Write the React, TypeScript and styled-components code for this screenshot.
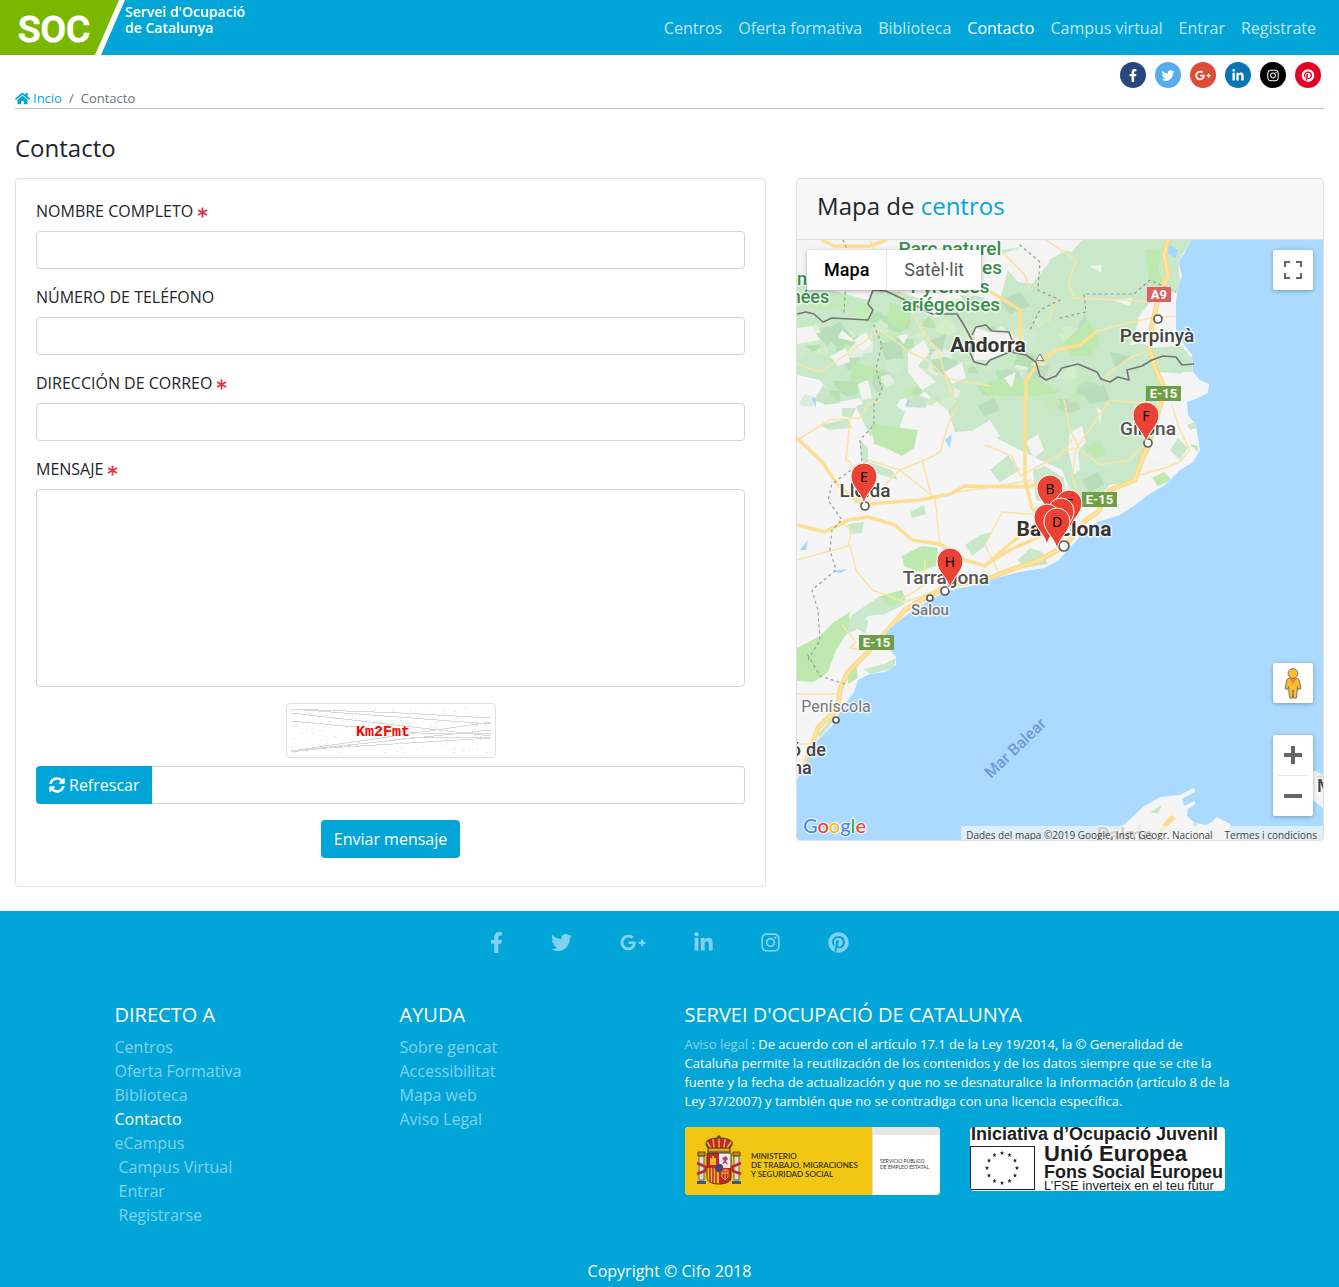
import React from "react";
import styled, { createGlobalStyle, css } from "styled-components";
import {
  FaFacebookF,
  FaTwitter,
  FaGooglePlusG,
  FaLinkedinIn,
  FaInstagram,
  FaPinterest,
  FaHome,
  FaSyncAlt,
} from "react-icons/fa";

const blue = "#02a5d8";
const sans = `"Open Sans", "Noto Sans", sans-serif`;

const GlobalStyle = createGlobalStyle`
  *, *::before, *::after { box-sizing: border-box; }
  body {
    margin: 0;
    background: #fff;
    color: #212529;
    font-family: ${sans};
    font-size: 16px;
    line-height: 24px;
  }
  a { color: ${blue}; text-decoration: none; }
  h1, h2, h3, p, ul, ol { margin: 0; padding: 0; font-weight: 400; }
  ul, ol { list-style: none; }
  svg { display: block; }
  button, input, textarea { font: inherit; }
`;

/* ---------- header ---------- */

const Header = styled.header`
  display: flex;
  justify-content: space-between;
  height: 55px;
  padding-right: 15px;
  background: ${blue};
`;

const Brand = styled.a`
  display: flex;
  color: #fff;
  font-size: 14px;
  font-weight: 600;
  line-height: 16px;
`;

const BrandName = styled.span`
  padding-top: 4px;
`;

const Nav = styled.nav`
  display: flex;
  align-items: center;
`;

const NavLink = styled.a<{ $active?: boolean }>`
  padding: 8px;
  color: ${(p) => (p.$active ? "#fff" : "rgba(255, 255, 255, 0.75)")};
`;

/* ---------- page ---------- */

const Page = styled.main`
  padding: 7px 15px 24px;
`;

const SocialList = styled.ul`
  display: flex;
  justify-content: flex-end;
  gap: 9px;
  margin-bottom: 1px;
  padding-right: 3px;
`;

const SocialLink = styled.a<{ $color: string; $width: number }>`
  display: flex;
  align-items: center;
  justify-content: center;
  width: 26px;
  height: 26px;
  border-radius: 50%;
  background: ${(p) => p.$color};
  color: #fff;

  svg {
    width: ${(p) => p.$width}px;
    height: 13px;
  }
`;

const Breadcrumb = styled.ol`
  display: flex;
  gap: 7px;
  height: 20px;
  border-bottom: 1px solid #bfbfbf;
  color: #6c757d;
  font-size: 13px;
  line-height: 19px;
`;

const HomeLink = styled.a`
  display: flex;
  align-items: center;
  gap: 3px;
`;

const Title = styled.h1`
  margin: 24px 0 16px;
  font-size: 24px;
  line-height: 29px;
`;

const Columns = styled.div`
  display: grid;
  grid-template-columns: 7fr 5fr;
  align-items: start;
  margin: 0 -15px;
`;

const Column = styled.div`
  min-width: 0;
  padding: 0 15px;
`;

const Card = styled.section`
  border: 1px solid #dfdfdf;
  border-radius: 4px;
  background: #fff;
  overflow: hidden;
`;

/* ---------- form ---------- */

const Form = styled.form`
  display: flex;
  flex-direction: column;
  gap: 16px;
  padding: 20px 20px 28px;
`;

const Field = styled.div`
  display: flex;
  flex-direction: column;
  gap: 8px;
`;

const Label = styled.label`
  display: flex;
  align-items: center;
  gap: 4px;

  svg { margin-top: 3px; }
`;

const control = css`
  display: block;
  width: 100%;
  padding: 6px 12px;
  border: 1px solid #ced4da;
  border-radius: 4px;
  background: #fff;
  color: #495057;
`;

const Input = styled.input`
  ${control}
  height: 38px;
`;

const TextArea = styled.textarea`
  ${control}
  height: 198px;
  resize: none;
`;

const CaptchaFrame = styled.div`
  align-self: center;
  padding: 4px;
  border: 1px solid #dee2e6;
  border-radius: 4px;
`;

const InputGroup = styled.div`
  display: flex;

  ${Input} {
    flex: 1;
    border-left: 0;
    border-radius: 0 4px 4px 0;
  }
`;

const Button = styled.button<{ $joined?: boolean }>`
  display: flex;
  align-items: center;
  gap: 4px;
  align-self: center;
  height: 38px;
  padding: 0 13px;
  border: 0;
  border-radius: ${(p) => (p.$joined ? "4px 0 0 4px" : "4px")};
  background: ${blue};
  color: #fff;
  cursor: pointer;
`;

/* ---------- map ---------- */

const CardHeader = styled.h2`
  padding: 12px 20px 19px;
  border-bottom: 1px solid #dfdfdf;
  background: #f7f7f7;
  font-size: 24px;
  line-height: 29px;
`;

const MapBox = styled.div`
  position: relative;
  height: 600px;
  overflow: hidden;
  background: #aadaff;
`;

const MapSvg = styled.svg`
  width: 100%;
  height: 100%;
`;

const MapTypes = styled.div`
  position: absolute;
  top: 10px;
  left: 10px;
  display: flex;
  border-radius: 2px;
  box-shadow: 0 1px 4px rgba(0, 0, 0, 0.3);
`;

const MapType = styled.button<{ $on?: boolean }>`
  height: 40px;
  padding: 0 17px;
  border: 0;
  border-left: ${(p) => (p.$on ? "0" : "1px solid #e6e6e6")};
  background: #fff;
  color: ${(p) => (p.$on ? "#000" : "#565656")};
  font-family: Roboto, sans-serif;
  font-size: 18px;
  font-weight: ${(p) => (p.$on ? 500 : 400)};
`;

const MapTools = styled.div`
  position: absolute;
  top: 10px;
  right: 10px;
  bottom: 24px;
  display: flex;
  flex-direction: column;
`;

const ToolBlock = styled.div<{ $push?: boolean }>`
  margin-top: ${(p) => (p.$push ? "auto" : "0")};
  margin-bottom: ${(p) => (p.$push ? "32px" : "0")};
  border-radius: 2px;
  background: #fff;
  box-shadow: 0 1px 4px rgba(0, 0, 0, 0.3);
`;

const ToolButton = styled.button`
  display: flex;
  align-items: center;
  justify-content: center;
  width: 40px;
  height: 40px;
  padding: 0;
  border: 0;
  background: none;
`;

const ToolRule = styled.div`
  height: 1px;
  margin: 0 5px;
  background: #e6e6e6;
`;

const Attribution = styled.div`
  position: absolute;
  right: 0;
  bottom: 0;
  display: flex;
  gap: 12px;
  height: 14px;
  padding: 0 6px 0 5px;
  background: rgba(245, 245, 245, 0.7);
  color: #444;
  font-size: 10px;
  line-height: 18px;
  white-space: nowrap;

  a { color: #444; }
`;

/* ---------- footer ---------- */

const Footer = styled.footer`
  padding-bottom: 4px;
  background: ${blue};
  color: #fff;
`;

const FooterSocial = styled.ul`
  display: flex;
  justify-content: center;
  gap: 48px;
  padding-top: 21px;
`;

const FooterIcon = styled.a<{ $width: number }>`
  display: block;
  color: rgba(255, 255, 255, 0.5);

  svg {
    width: ${(p) => p.$width}px;
    height: 21px;
  }
`;

const FooterGrid = styled.div`
  display: grid;
  grid-template-columns: 1fr 1fr 2fr;
  max-width: 1140px;
  margin: 50px auto 0;
`;

const FooterColumn = styled.section`
  padding: 0 15px;
`;

const FooterTitle = styled.h3`
  margin-bottom: 8px;
  font-size: 20px;
  line-height: 24px;
`;

const FooterLink = styled.a<{ $active?: boolean; $nested?: boolean }>`
  display: block;
  padding-left: ${(p) => (p.$nested ? "4px" : "0")};
  color: ${(p) => (p.$active ? "#fff" : "rgba(255, 255, 255, 0.5)")};
`;

const Legal = styled.p`
  margin-right: -10px;
  font-size: 13px;
  line-height: 19px;

  a { color: rgba(255, 255, 255, 0.5); }
`;

const Logos = styled.div`
  display: grid;
  grid-template-columns: 1fr 1fr;
  column-gap: 30px;
  align-items: start;
  margin-top: 16px;
`;

const LogoSvg = styled.svg`
  width: 100%;
  height: auto;
  border-radius: 4px;
`;

const Copyright = styled.p`
  margin-top: 32px;
  text-align: center;
`;

/* ---------- drawings ---------- */

const SocLogo = () => (
  <svg width="125" height="55" viewBox="0 0 125 55" role="img" aria-label="SOC">
    <path d="M0 0H125L101 55H0z" fill="#fff" />
    <path d="M0 0H119L95 55H0z" fill="#7ab800" />
    <text x="18" y="42" fill="#fff" stroke="#fff" strokeWidth="1" fontFamily="Roboto, sans-serif" fontWeight="500" fontSize="37">
      SOC
    </text>
  </svg>
);

const Required = () => (
  <svg width="11" height="11" viewBox="0 0 11 11" role="img" aria-label="obligatorio">
    <path d="M5.500 0.500V10.500M1 3L10 8M10 3L1 8" stroke="#dc3545" strokeWidth="1.800" fill="none" />
  </svg>
);

/* deterministic pseudo-random number in 0..1 */
const noise = (n: number) => {
  const v = Math.sin(n * 12.9898) * 43758.5453;
  return v - Math.floor(v);
};

const speckles = Array.from({ length: 190 }, (_, i) => [
  Math.floor(noise(i + 1) * 200),
  Math.floor(noise(i + 500) * 45),
]);

const Captcha = () => (
  <svg width="200" height="45" viewBox="0 0 200 45" role="img" aria-label="Captcha" shapeRendering="crispEdges">
    {speckles.map(([x, y], i) => (
      <rect key={i} x={x} y={y} width="1" height="1" fill="#dcdcdc" />
    ))}
    <path
      d="M0 1L200 16M0 1L110 5L200 10M0 5L200 28M0 13L130 25L200 26M0 43L200 14M0 43L200 22M0 44L120 30L200 29M20 41L200 30"
      stroke="#d8d8d8"
      fill="none"
    />
    <text x="65" y="28" fill="#f00" fontFamily='"Liberation Mono", monospace' fontWeight="700" fontSize="15">
      Km2Fmt
    </text>
  </svg>
);

const greens = [
  "M797 262L830 290L868 300L872 290L900 292L960 312L1000 300L1010 262L1000 250L1030 246L1046 262L1083 240H1191L1178 262L1181 290L1158 300L1140 318L1130 345L1176 340L1192 358L1193 372L1182 372L1170 392L1158 400L1150 450L1140 470L1130 482L1110 485L1092 505L1078 508L1062 470L1040 460L1000 440L985 430L955 432L948 410L925 392L900 400L885 425L868 415L860 398L838 402L820 380L797 375z",
  "M797 300L820 300L812 313L797 311z",
  "M856 406L885 398L905 412L898 432L870 436z",
  "M860 440L868 448L868 462L892 470L898 480L878 474L862 462z",
  "M820 425L848 419L852 428L830 430z",
  "M842 408L856 408L852 418L842 416z",
  "M990 470L1008 455L1020 470L1000 482z",
  "M965 545L980 535L992 532L985 546L972 556z",
  "M1018 560L1030 548L1042 552L1048 564L1024 568z",
  "M1033 470L1045 466L1064 478L1066 500L1052 505L1036 500z",
  "M833 640L852 615L880 596L898 596L905 604L885 614L868 616L856 630z",
  "M856 618L868 620L866 634L856 628z",
  "M848 524L864 522L862 533L850 534z",
  "M910 512L924 505L926 514L912 518z",
  "M864 669L884 664L896 658L894 668L870 674z",
  "M864 683L875 682L868 688z",
  "M818 734L832 718L836 716L830 726L820 737z",
  "M1187 425L1195 422L1196 428L1190 430z",
  "M1170 450L1178 438L1188 448L1180 460z",
];

const brightGreens = [
  "M872 424L918 430L914 448L902 456L886 448L874 444z",
  "M902 556L922 546L938 548L936 566L918 572L904 566z",
  "M880 596L902 590L906 600L890 606z",
  "M797 648L820 636L834 622L850 612L848 632L836 650L828 672L814 682L797 681z",
  "M1086 446L1100 440L1106 455L1096 458L1086 452z",
  "M1152 478L1164 472L1172 480L1158 486z",
  "M1190 444L1198 446L1198 452z",
  "M1162 248L1158 270L1166 290L1150 284L1145 250z",
  "M848 670L856 664L858 678L848 684z",
  "M978 386L1000 378L1040 380L1060 392L1040 396L990 396z",
  "M1064 342L1088 320L1100 340L1092 356L1072 356z",
  "M852 362L876 368L868 384L850 380z",
  "M890 302L912 312L904 330L888 322z",
];

const shades = [
  "M820 332L840 322L852 336L836 346z",
  "M880 344L900 338L904 358L886 360z",
  "M930 340L946 334L942 352z",
  "M1000 300L1020 292L1030 306L1010 314z",
  "M1080 390L1104 384L1110 400L1090 404z",
  "M1082 480L1098 472L1104 484L1090 494z",
  "M1110 352L1130 356L1116 368z",
  "M978 406L994 398L1000 410L984 416z",
];

const clearings = [
  "M797 262L812 270L806 282L797 280z",
  "M1002 254L1030 244L1050 262L1032 284L1018 282L1006 268z",
  "M830 356L846 348L850 362L838 366z",
  "M854 340L866 332L872 344L862 352z",
  "M858 384L868 380L872 398L862 400z",
  "M908 352L924 340L930 352L918 366L936 382L922 390L908 372z",
  "M897 336L908 334L904 344z",
  "M945 372L962 362L966 378L952 384z",
  "M1004 378L1016 372L1012 388z",
  "M797 328L812 326L820 340L797 344z",
  "M838 338L842 330L856 342z",
  "M1089 266L1102 265L1101 272z",
  "M1062 240H1082L1072 252L1062 250z",
  "M1112 300L1132 298L1130 306z",
  "M1070 432L1082 426L1086 442L1078 452L1080 470L1074 474L1068 450z",
  "M1097 406L1102 412L1100 424z",
  "M1146 455L1158 462L1150 474L1140 470z",
  "M1026 442L1038 434L1044 450L1034 458z",
  "M975 328L990 332L1012 334L1020 346L988 360L974 360z",
  "M970 432L990 420L1000 436L985 444z",
];

const reliefColors = ["#d5f0cb", "#b7dbb9", "#c2ebb6", "#eef3ec", "#d0ebd0", "#b0dfa8"];

/* small irregular patches of relief over the Pyrenees */
const relief = Array.from({ length: 110 }, (_, i) => {
  const cx = 800 + noise(i + 11) * 290;
  const cy = 300 + noise(i + 211) * 105;
  const r = 3 + noise(i + 411) * 7;
  const points = Array.from({ length: 6 }, (_, k) => {
    const reach = r * (0.5 + noise(i * 7 + k + 611) * 0.9);
    const angle = (k * Math.PI) / 3 - 0.5;
    return `${(cx + reach * 1.3 * Math.cos(angle)).toFixed(1)},${(cy + reach * Math.sin(angle)).toFixed(1)}`;
  }).join(" ");
  return { points, fill: reliefColors[i % reliefColors.length] };
});

const minorRoads = [
  "M797 440L830 420L860 418L868 404L880 400",
  "M850 420L846 460L850 462L865 505",
  "M797 560L848 546L852 530L838 520",
  "M850 545L856 570L872 590L905 602L940 590",
  "M865 505L900 470L925 460L940 452L950 420L958 405",
  "M868 460L900 470L935 498L940 544",
  "M922 460L932 498",
  "M935 498L950 493L1000 486L1032 480",
  "M900 600L925 585L925 560",
  "M870 240L880 262L905 300L922 330L938 352L952 395",
  "M797 364L820 372L850 352L880 330",
  "M880 330L910 352L930 362L945 378L990 386",
  "M1000 250L1025 275L1030 290",
  "M1046 240L1076 260L1068 285L1075 298L1120 300L1150 302",
  "M1094 332L1120 325L1150 318L1176 316",
  "M1064 400L1070 430L1080 450L1100 465L1130 460L1145 444",
  "M1062 450L1076 449L1110 400L1140 403L1150 410",
  "M1076 450L1072 476L1082 502",
  "M1140 475L1165 468L1180 462L1190 450L1180 430L1172 405",
  "M985 445L1012 456L1020 476L1060 455L1072 440",
  "M1000 575L985 545L1002 512L1040 515",
  "M1105 380L1110 372L1130 358L1150 350",
  "M842 625L856 642L850 648L862 650",
  "M797 694L840 694",
  "M797 744L815 744",
  "M1048 322L1056 300",
];

const majorRoads = [
  "M822 240L834 246L870 246L886 240",
  "M797 438L822 462L838 485L856 500L865 505L880 503L920 500L950 494L965 486L1028 487L1052 480",
  "M797 525L825 532L848 520L868 517L895 525L912 540L940 544L965 560L985 566L1005 548L1040 520L1050 528",
  "M985 565L1010 550L1045 534",
  "M1025 398L1025 480L1032 508L1050 530",
  "M1026 398L1026 380L1040 362L1056 350L1080 345L1096 332",
  "M991 292L1020 310L1020 345",
];

const motorway =
  "M1168 240L1164 255L1168 275L1158 300L1152 325L1150 350L1156 370L1163 385L1162 400L1150 440L1140 465L1135 480L1110 490L1098 512L1086 520L1066 545L1040 560L1010 570L985 580L950 585L925 598L905 610L888 630L866 654L848 672L840 690L838 708L818 728L812 745L803 770";

const border =
  "M797 314L806 312L814 314L823 322L832 318L868 320L873 310L868 304L873 290L886 291L905 300L932 314L957 314L964 325L972 340L970 352L974 362L986 365L990 360L1010 352L1026 355L1036 362L1040 376L1046 380L1056 376L1062 368L1078 364L1097 372L1101 379L1110 382L1118 377L1129 380L1127 370L1142 366L1152 360L1163 356L1176 357L1182 365L1194 364M972 335L976 327L986 325L992 331L1009 332L1012 340L1022 344L1012 352";

const dotted =
  "M843 240L850 255L846 280L844 312M874 325L882 345L876 368L882 390L874 405L874 425L860 440L862 462L832 484L828 500L842 520L832 530L830 550L836 570L812 590L818 610L820 640L808 660M808 655L820 676L845 684M1020 245L1040 262L1038 290L1060 300L1040 310L1030 330M1060 318L1086 312L1084 294L1134 294L1150 280L1176 292";

type LabelSpec = { x: number; y: number; t: string; s: number; w?: number; c: string };

const parkGreen = "#388e4a";

const places: LabelSpec[] = [
  { x: 950, y: 255, t: "Parc naturel", s: 19, c: parkGreen },
  { x: 950, y: 274, t: "régional des", s: 19, c: parkGreen },
  { x: 950, y: 293, t: "Pyrénées", s: 19, c: parkGreen },
  { x: 951, y: 311, t: "ariégeoises", s: 19, c: parkGreen },
  { x: 797, y: 285, t: "on", s: 18, c: parkGreen },
  { x: 810, y: 303, t: "nées", s: 18, c: parkGreen },
  { x: 988, y: 352, t: "Andorra", s: 21, w: 700, c: "#333" },
  { x: 1157, y: 342, t: "Perpinyà", s: 19, c: "#444" },
  { x: 1148, y: 435, t: "Girona", s: 19, c: "#555" },
  { x: 865, y: 497, t: "Lleida", s: 19, c: "#444" },
  { x: 1064, y: 536, t: "Barcelona", s: 21, w: 700, c: "#333" },
  { x: 946, y: 584, t: "Tarragona", s: 19, c: "#555" },
  { x: 930, y: 615, t: "Salou", s: 15, c: "#777" },
  { x: 836, y: 712, t: "Peníscola", s: 16, w: 400, c: "#777" },
  { x: 816, y: 756, t: "de", s: 18, c: "#444" },
  { x: 796, y: 756, t: "ó", s: 18, c: "#444" },
  { x: 802, y: 774, t: "na", s: 18, c: "#444" },
  { x: 1125, y: 842, t: "Palma", s: 20, w: 700, c: "#777" },
  { x: 1325, y: 792, t: "M", s: 18, w: 500, c: "#444" },
];

const towns = [
  [1158, 319, 4],
  [1148, 443, 4],
  [865, 506, 4],
  [1064, 546, 5],
  [945, 591, 4],
  [930, 598, 3],
  [836, 720, 3],
];

const shields = [
  { x: 1147, y: 287, w: 24, t: "A9", c: "#dc5f63" },
  { x: 1146, y: 386, w: 35, t: "E-15", c: "#6f9f45" },
  { x: 1082, y: 492, w: 35, t: "E-15", c: "#6f9f45" },
  { x: 859, y: 635, w: 35, t: "E-15", c: "#6f9f45" },
];

const pins = [
  { x: 864, y: 505, t: "E" },
  { x: 950, y: 590, t: "H" },
  { x: 1146, y: 444, t: "F" },
  { x: 1050, y: 517, t: "B" },
  { x: 1069, y: 532, t: "C" },
  { x: 1061, y: 540, t: "" },
  { x: 1047, y: 546, t: "" },
  { x: 1057, y: 550, t: "D" },
];

const land =
  "M797 240H1191L1184 254L1178 262L1182 275L1178 288L1176 300V330L1185 346L1192 355L1193 372L1200 380L1209 384L1208 393L1198 398L1187 402L1188 415L1196 425L1200 450L1193 462L1180 470L1165 485L1148 495L1135 505L1120 515L1098 522L1085 530L1075 542L1058 561L1044 568L1020 572L1000 577L975 585L960 588L945 592L930 600L915 609L903 618L888 630L880 642L890 650L896 657L896 665L885 672L870 674L858 680L854 692L845 704L838 716L832 726L820 738L812 746L806 762L797 780z";

const CentresMap = () => (
  <MapSvg viewBox="797 240 526 600" preserveAspectRatio="xMidYMid slice" role="img" aria-label="Mapa de centros">
    <defs>
      <clipPath id="land"><path d={land} /></clipPath>
    </defs>
    <path d={land} fill="#f5f5f5" />
    <path d="M1108 840L1143 807L1160 797L1180 795L1194 788L1195 792L1182 799L1184 806L1194 801L1196 804L1188 809L1187 816L1195 823L1206 825L1212 822L1217 817L1230 824V840zM1313 770L1323 775V808L1313 800z" fill="#f5f5f5" />
    <path d="M1150 812L1162 805L1158 814zM1136 828L1140 824L1142 832zM1193 824L1196 822L1198 828zM1316 776L1323 775V784z" fill="#c8e8c9" />
    <path d="M1160 834L1168 822L1174 817" stroke="#fbdc87" strokeWidth="5" fill="none" />
    <g clipPath="url(#land)">
      {greens.map((d) => <path key={d} d={d} fill="#c8e8c9" />)}
      <g opacity="0.7">
        {relief.map((p) => <polygon key={p.points} points={p.points} fill={p.fill} />)}
      </g>
      {brightGreens.map((d) => <path key={d} d={d} fill="#bde9ae" />)}
      {shades.map((d) => <path key={d} d={d} fill="#b9dcba" />)}
      {clearings.map((d) => <path key={d} d={d} fill="#f3f3f1" />)}
      <path d="M1138 318L1150 302L1176 300V346L1150 348L1140 340zM1160 372L1184 374L1178 396L1188 420L1180 426L1164 402zM1170 408L1182 412L1184 434L1174 436z" fill="#f5f5f5" />
      <path d="M800 550L808 540L806 550zM832 571L848 569L840 573zM945 440L952 434L950 448zM812 398H816V408zM905 405L910 398L908 408zM1168 244L1178 250L1176 258L1168 254z" fill="#a6d8fb" />
      <g fill="none" strokeLinejoin="round" strokeLinecap="round">
        {minorRoads.map((d) => <path key={d} d={d} stroke="#fbe3a6" strokeWidth="1.500" />)}
        {majorRoads.map((d) => <path key={d} d={d} stroke="#fcdf93" strokeWidth="3.500" />)}
        <path d={motorway} stroke="#f8d27c" strokeWidth="5" />
        <path d={motorway} stroke="#fee29a" strokeWidth="3.500" />
        <path d={dotted} stroke="#9a9a9a" strokeWidth="1.200" strokeDasharray="2 4" />
      </g>
    </g>
    <path d={border} fill="none" stroke="#757575" strokeWidth="1.600" strokeLinejoin="round" />
    <path d="M1036 360L1040 354L1044 361z" fill="#f5f5f5" stroke="#757575" />
    {shields.map((s) => (
      <g key={`${s.x}-${s.y}`}>
        <rect x={s.x} y={s.y} width={s.w} height="15" fill={s.c} />
        <text x={s.x + s.w / 2} y={s.y + 12} textAnchor="middle" fill="#fff" fontFamily="Roboto, sans-serif" fontWeight="700" fontSize="13">
          {s.t}
        </text>
      </g>
    ))}
    {towns.map(([x, y, r]) => (
      <circle key={`${x}-${y}`} cx={x} cy={y} r={r} fill="#fff" stroke="#5a5a5a" strokeWidth="1.700" />
    ))}
    {places.map((p) => (
      <text
        key={`${p.t}-${p.y}`}
        x={p.x}
        y={p.y}
        textAnchor="middle"
        fontFamily="Roboto, sans-serif"
        fontSize={p.s}
        fontWeight={p.w ?? 500}
        fill={p.c}
        stroke="#fff"
        strokeOpacity="0.7"
        strokeWidth="3"
        strokeLinejoin="round"
        paintOrder="stroke"
      >
        {p.t}
      </text>
    ))}
    <text transform="translate(1019 752) rotate(-44)" textAnchor="middle" fontFamily="Roboto, sans-serif" fontSize="16" fontWeight="500" fill="#6f9bd8">
      Mar Balear
    </text>
    {pins.map((p) => (
      <g key={`${p.x}-${p.y}`} transform={`translate(${p.x} ${p.y})`}>
        <path
          d="M0 0C-1.500 -13 -13 -17 -13 -29A13 13 0 0 1 13 -29C13 -17 1.500 -13 0 0z"
          fill="#ea4335"
          stroke="#fff"
        />
        <text x="0" y="-23" textAnchor="middle" fontFamily={sans} fontSize="14" fill="#000">{p.t}</text>
      </g>
    ))}
    <text x="803" y="833" fontFamily="Lato, sans-serif" fontSize="20" fontWeight="500" stroke="#fff" strokeWidth="2" paintOrder="stroke">
      <tspan fill="#4285f4">G</tspan>
      <tspan fill="#ea4335">o</tspan>
      <tspan fill="#fbbc05">o</tspan>
      <tspan fill="#4285f4">g</tspan>
      <tspan fill="#34a853">l</tspan>
      <tspan fill="#ea4335">e</tspan>
    </text>
  </MapSvg>
);

const Pegman = () => (
  <svg width="18" height="31" viewBox="0 0 18 31">
    <path
      d="M6 10L3 11.500L1 20.500L3.500 21.500L4.500 18.500L5.500 30H8.500L9 22L9.500 30H12.500L13.500 18.500L14.500 21.500L17 20.500L15 11.500L12 10z"
      fill="#fbbc2d"
      stroke="#7d7462"
    />
    <path d="M5.500 10.500H12.500L9 16z" fill="#e8833a" />
    <circle cx="9" cy="5.500" r="4.900" fill="#fbbc2d" stroke="#7d7462" />
  </svg>
);

const MinistryLogo = () => (
  <LogoSvg viewBox="0 0 255 68" role="img" aria-label="Ministerio de Trabajo, Migraciones y Seguridad Social">
    <rect width="255" height="68" fill="#fff" />
    <rect width="187" height="68" fill="#f1c713" />
    <rect x="187" width="68" height="8" fill="#e6e6e6" />
    <rect x="187" width="1" height="68" fill="#ddd" />
    <g>
      <path d="M23 21C17 14 25 11 34 11C44 11 51 14 45 21z" fill="#c5252c" stroke="#4b3a18" />
      <path d="M34 11V21M28 12L29 21M40 12L39 21M22 15L26 21M46 15L42 21" stroke="#e7b928" strokeWidth="1.500" />
      <path d="M23 21H45V25H23z" fill="#d7a320" stroke="#4b3a18" />
      <circle cx="34" cy="10" r="1.800" fill="#5e4a20" />
      <path d="M22 26H34V41H22z" fill="#c5252c" />
      <path d="M34 26H46V41H34z" fill="#ececec" />
      <path d="M22 41H34V57C27 57 22 55 22 50z" fill="#f0b91d" />
      <path d="M34 41H46V50C46 55 41 57 34 57z" fill="#c5252c" />
      <path d="M25 41V55M28 41V56M31 41V57" stroke="#c5252c" strokeWidth="1.500" />
      <path d="M25 38V31H27V29H29V31H31V38z" fill="#e9b922" />
      <path d="M37 37L39 34L37 31L41 29L43 32L41 34L43 38L40 36z" fill="#a54a76" />
      <path d="M37 43H43V50L40 53L37 50zM37 46H43M40 43V53" fill="none" stroke="#e9b922" />
      <path d="M22 26H46V50C46 55 41 57 34 57C27 57 22 55 22 50z" fill="none" stroke="#4b3a18" />
      <circle cx="34" cy="41" r="4" fill="#2b4c8c" stroke="#c5252c" />
      <path d="M14 29H19V53H14zM49 29H54V53H49z" fill="#dedede" stroke="#6c6454" />
      <path d="M13 25H20V29H13zM48 25H55V29H48z" fill="#b98a1c" stroke="#5d4618" />
      <path d="M12 54H21V57H12zM47 54H56V57H47z" fill="#35588e" />
      <path d="M12 36L21 40L20 44L12 47M56 36L47 40L48 44L56 47" fill="none" stroke="#c5252c" strokeWidth="2.500" />
    </g>
    <g fontFamily="Lato, sans-serif" fontSize="8" fontWeight="500" fill="#222">
      <text x="66" y="32">MINISTERIO</text>
      <text x="66" y="41">DE TRABAJO, MIGRACIONES</text>
      <text x="66" y="50">Y SEGURIDAD SOCIAL</text>
    </g>
    <g fontFamily="Lato, sans-serif" fontSize="5" fill="#333">
      <text x="195" y="36">SERVICIO PÚBLICO</text>
      <text x="195" y="42">DE EMPLEO ESTATAL</text>
    </g>
  </LogoSvg>
);

const starPath = "M0 -2.200L0.600 -0.700L2.100 -0.700L0.900 0.300L1.300 1.900L0 1L-1.300 1.900L-0.900 0.300L-2.100 -0.700L-0.600 -0.700z";

const EuropeLogo = () => (
  <LogoSvg viewBox="0 0 255 64" role="img" aria-label="Unió Europea, Fons Social Europeu">
    <rect width="255" height="64" fill="#fff" />
    <rect x="0.500" y="19.500" width="64" height="43" fill="#fff" stroke="#222" />
    {Array.from({ length: 12 }, (_, i) => (
      <path
        key={i}
        d={starPath}
        fill="#222"
        transform={`translate(${32 + 15 * Math.sin((i * Math.PI) / 6)} ${41 - 15 * Math.cos((i * Math.PI) / 6)})`}
      />
    ))}
    <g fontFamily='"Liberation Sans", Arial, sans-serif' fontWeight="700" fill="#1d1d1d">
      <text x="1" y="13" fontSize="18">Iniciativa d’Ocupació Juvenil</text>
      <text x="74" y="34" fontSize="22">Unió Europea</text>
      <text x="74" y="51" fontSize="18">Fons Social Europeu</text>
      <text x="74" y="63" fontSize="13" fontWeight="400">L’FSE inverteix en el teu futur</text>
    </g>
  </LogoSvg>
);

/* ---------- data ---------- */

const nav = ["Centros", "Oferta formativa", "Biblioteca", "Contacto", "Campus virtual", "Entrar", "Registrate"];

/* small and large are the glyph widths in the round badges and in the footer */
const social = [
  { name: "Facebook", Icon: FaFacebookF, color: "#29487d", small: 8, large: 13 },
  { name: "Twitter", Icon: FaTwitter, color: "#55acee", small: 14, large: 21 },
  { name: "Google Plus", Icon: FaGooglePlusG, color: "#dd4b39", small: 16, large: 26 },
  { name: "LinkedIn", Icon: FaLinkedinIn, color: "#0976b4", small: 12, large: 19 },
  { name: "Instagram", Icon: FaInstagram, color: "#000", small: 12, large: 19 },
  { name: "Pinterest", Icon: FaPinterest, color: "#e60023", small: 14, large: 21 },
];

const direct = [
  { t: "Centros" },
  { t: "Oferta Formativa" },
  { t: "Biblioteca" },
  { t: "Contacto", active: true },
  { t: "eCampus" },
  { t: "Campus Virtual", nested: true },
  { t: "Entrar", nested: true },
  { t: "Registrarse", nested: true },
];

const help = ["Sobre gencat", "Accessibilitat", "Mapa web", "Aviso Legal"];

export default function App() {
  return (
    <>
      <GlobalStyle />
      <Header>
        <Brand href="#">
          <SocLogo />
          <BrandName>
            Servei d'Ocupació
            <br />
            de Catalunya
          </BrandName>
        </Brand>
        <Nav>
          {nav.map((item) => (
            <NavLink key={item} href="#" $active={item === "Contacto"}>{item}</NavLink>
          ))}
        </Nav>
      </Header>

      <Page>
        <SocialList>
          {social.map(({ name, Icon, color, small }) => (
            <li key={name}>
              <SocialLink href="#" aria-label={name} $color={color} $width={small}>
                <Icon />
              </SocialLink>
            </li>
          ))}
        </SocialList>
        <Breadcrumb>
          <li><HomeLink href="#"><FaHome size={15} />Incio</HomeLink></li>
          <li>/</li>
          <li>Contacto</li>
        </Breadcrumb>
        <Title>Contacto</Title>

        <Columns>
          <Column>
            <Card>
              <Form onSubmit={(e) => e.preventDefault()}>
                <Field>
                  <Label htmlFor="name">NOMBRE COMPLETO <Required /></Label>
                  <Input id="name" type="text" />
                </Field>
                <Field>
                  <Label htmlFor="phone">NÚMERO DE TELÉFONO</Label>
                  <Input id="phone" type="tel" />
                </Field>
                <Field>
                  <Label htmlFor="email">DIRECCIÓN DE CORREO <Required /></Label>
                  <Input id="email" type="email" />
                </Field>
                <Field>
                  <Label htmlFor="message">MENSAJE <Required /></Label>
                  <TextArea id="message" />
                </Field>
                <Field>
                  <CaptchaFrame><Captcha /></CaptchaFrame>
                  <InputGroup>
                    <Button type="button" $joined><FaSyncAlt size={16} />Refrescar</Button>
                    <Input type="text" aria-label="Captcha" />
                  </InputGroup>
                </Field>
                <Button type="submit">Enviar mensaje</Button>
              </Form>
            </Card>
          </Column>

          <Column>
            <Card>
              <CardHeader>Mapa de <a href="#">centros</a></CardHeader>
              <MapBox>
                <CentresMap />
                <MapTypes>
                  <MapType type="button" $on>Mapa</MapType>
                  <MapType type="button">Satèl·lit</MapType>
                </MapTypes>
                <MapTools>
                  <ToolBlock>
                    <ToolButton type="button" aria-label="Pantalla completa">
                      <svg width="18" height="18" viewBox="0 0 18 18">
                        <path d="M1 6V1H6M12 1H17V6M17 12V17H12M6 17H1V12" fill="none" stroke="#666" strokeWidth="2" />
                      </svg>
                    </ToolButton>
                  </ToolBlock>
                  <ToolBlock $push>
                    <ToolButton type="button" aria-label="Street View"><Pegman /></ToolButton>
                  </ToolBlock>
                  <ToolBlock>
                    <ToolButton type="button" aria-label="Ampliar">
                      <svg width="18" height="18" viewBox="0 0 18 18"><path d="M7 0H11V7H18V11H11V18H7V11H0V7H7z" fill="#666" /></svg>
                    </ToolButton>
                    <ToolRule />
                    <ToolButton type="button" aria-label="Reducir">
                      <svg width="18" height="18" viewBox="0 0 18 18"><path d="M0 7H18V11H0z" fill="#666" /></svg>
                    </ToolButton>
                  </ToolBlock>
                </MapTools>
                <Attribution>
                  <span>Dades del mapa ©2019 Google, Inst. Geogr. Nacional</span>
                  <a href="#">Termes i condicions</a>
                </Attribution>
              </MapBox>
            </Card>
          </Column>
        </Columns>
      </Page>

      <Footer>
        <FooterSocial>
          {social.map(({ name, Icon, large }) => (
            <li key={name}>
              <FooterIcon href="#" aria-label={name} $width={large}><Icon /></FooterIcon>
            </li>
          ))}
        </FooterSocial>
        <FooterGrid>
          <FooterColumn>
            <FooterTitle>DIRECTO A</FooterTitle>
            <ul>
              {direct.map((l) => (
                <li key={l.t}><FooterLink href="#" $active={l.active} $nested={l.nested}>{l.t}</FooterLink></li>
              ))}
            </ul>
          </FooterColumn>
          <FooterColumn>
            <FooterTitle>AYUDA</FooterTitle>
            <ul>
              {help.map((t) => (
                <li key={t}><FooterLink href="#">{t}</FooterLink></li>
              ))}
            </ul>
          </FooterColumn>
          <FooterColumn>
            <FooterTitle>SERVEI D'OCUPACIÓ DE CATALUNYA</FooterTitle>
            <Legal>
              <a href="#">Aviso legal</a> : De acuerdo con el artículo 17.1 de la Ley 19/2014, la © Generalidad de
              Cataluña permite la reutilización de los contenidos y de los datos siempre que se cite la fuente y la
              fecha de actualización y que no se desnaturalice la información (artículo 8 de la Ley 37/2007) y también
              que no se contradiga con una licencia específica.
            </Legal>
            <Logos>
              <MinistryLogo />
              <EuropeLogo />
            </Logos>
          </FooterColumn>
        </FooterGrid>
        <Copyright>Copyright © Cifo 2018</Copyright>
      </Footer>
    </>
  );
}
